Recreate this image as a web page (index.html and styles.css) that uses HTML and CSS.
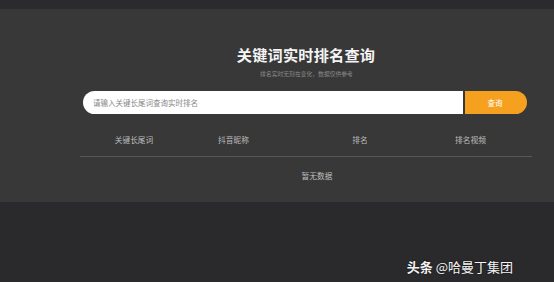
FILE: index.html
```html
<!DOCTYPE html>
<html lang="zh-CN">
<head>
    <meta charset="UTF-8">
    <meta name="viewport" content="width=device-width, initial-scale=1.0">
    <title>关键词实时排名查询</title>
    <link rel="stylesheet" href="styles.css">
</head>
<body>
    <div class="topbar"></div>
    <div class="panel">
        <h1 class="title">关键词实时排名查询</h1>
        <p class="subtitle">排名实时无刻在变化，数据仅供参考</p>
        <div class="search">
            <input class="search-input" type="text" placeholder="请输入关键长尾词查询实时排名">
            <button class="search-btn">查询</button>
        </div>
        <div class="table">
            <div class="table-head">
                <span>关键长尾词</span>
                <span>抖音昵称</span>
                <span>排名</span>
                <span>排名视频</span>
            </div>
            <div class="table-empty">暂无数据</div>
        </div>
    </div>
    <div class="watermark"><b>头条</b> @哈曼丁集团</div>
</body>
</html>
```

FILE: styles.css
```css
body {
    margin: 0;
    background-color: #2a2a2c;
    font-family: "Noto Sans CJK SC", "Noto Sans", sans-serif;
    height: 282px;
    overflow: hidden;
    position: relative;
}
.topbar {
    height: 9px;
    background-color: #2b2b2d;
}
.panel {
    height: 193px;
    box-sizing: border-box;
    padding-top: 37px;
    background-color: #383838;
}
.title {
    margin: 0;
    padding-left: 58px;
    text-align: center;
    font-size: 15.2px;
    line-height: 16px;
    font-weight: bold;
    color: #f4f4f4;
    letter-spacing: 0.2px;
}
.subtitle {
    margin: 8px 0 0;
    padding-left: 59px;
    text-align: center;
    font-size: 5.8px;
    line-height: 8px;
    color: #8a8a8a;
}
.search {
    display: flex;
    gap: 2px;
    margin: 13px 0 0 83px;
    width: 444px;
    height: 23px;
}
.search-input {
    flex: 1;
    border: none;
    outline: none;
    margin: 0;
    padding: 0 0 0 10px;
    border-radius: 12px 0 0 12px;
    background-color: #fff;
    font-family: inherit;
    font-size: 7.5px;
    color: #333;
}
.search-input::placeholder {
    color: #888;
}
.search-btn {
    width: 62px;
    border: none;
    margin: 0;
    padding: 0 2px 0 0;
    border-radius: 0 12px 12px 0;
    background-color: #f5a11f;
    color: #fff;
    font-family: inherit;
    font-size: 7.5px;
}
.table {
    margin: 21px 0 0 80px;
    width: 452px;
}
.table-head {
    display: grid;
    grid-template-columns: 108px 91px 162px 59px;
    padding: 0 32px 11px 0;
    border-bottom: 1px solid #585858;
    font-size: 7.7px;
    line-height: 10px;
    color: #bdbdbd;
    text-align: center;
}
.table-empty {
    padding: 14px 0 0 22px;
    text-align: center;
    font-size: 7.7px;
    line-height: 10px;
    color: #bdbdbd;
}
.watermark {
    position: absolute;
    right: 41px;
    top: 258px;
    font-size: 13px;
    line-height: 18px;
    color: #f4f4f4;
    text-shadow: 0 0 2px rgba(0,0,0,0.6);
}
```
